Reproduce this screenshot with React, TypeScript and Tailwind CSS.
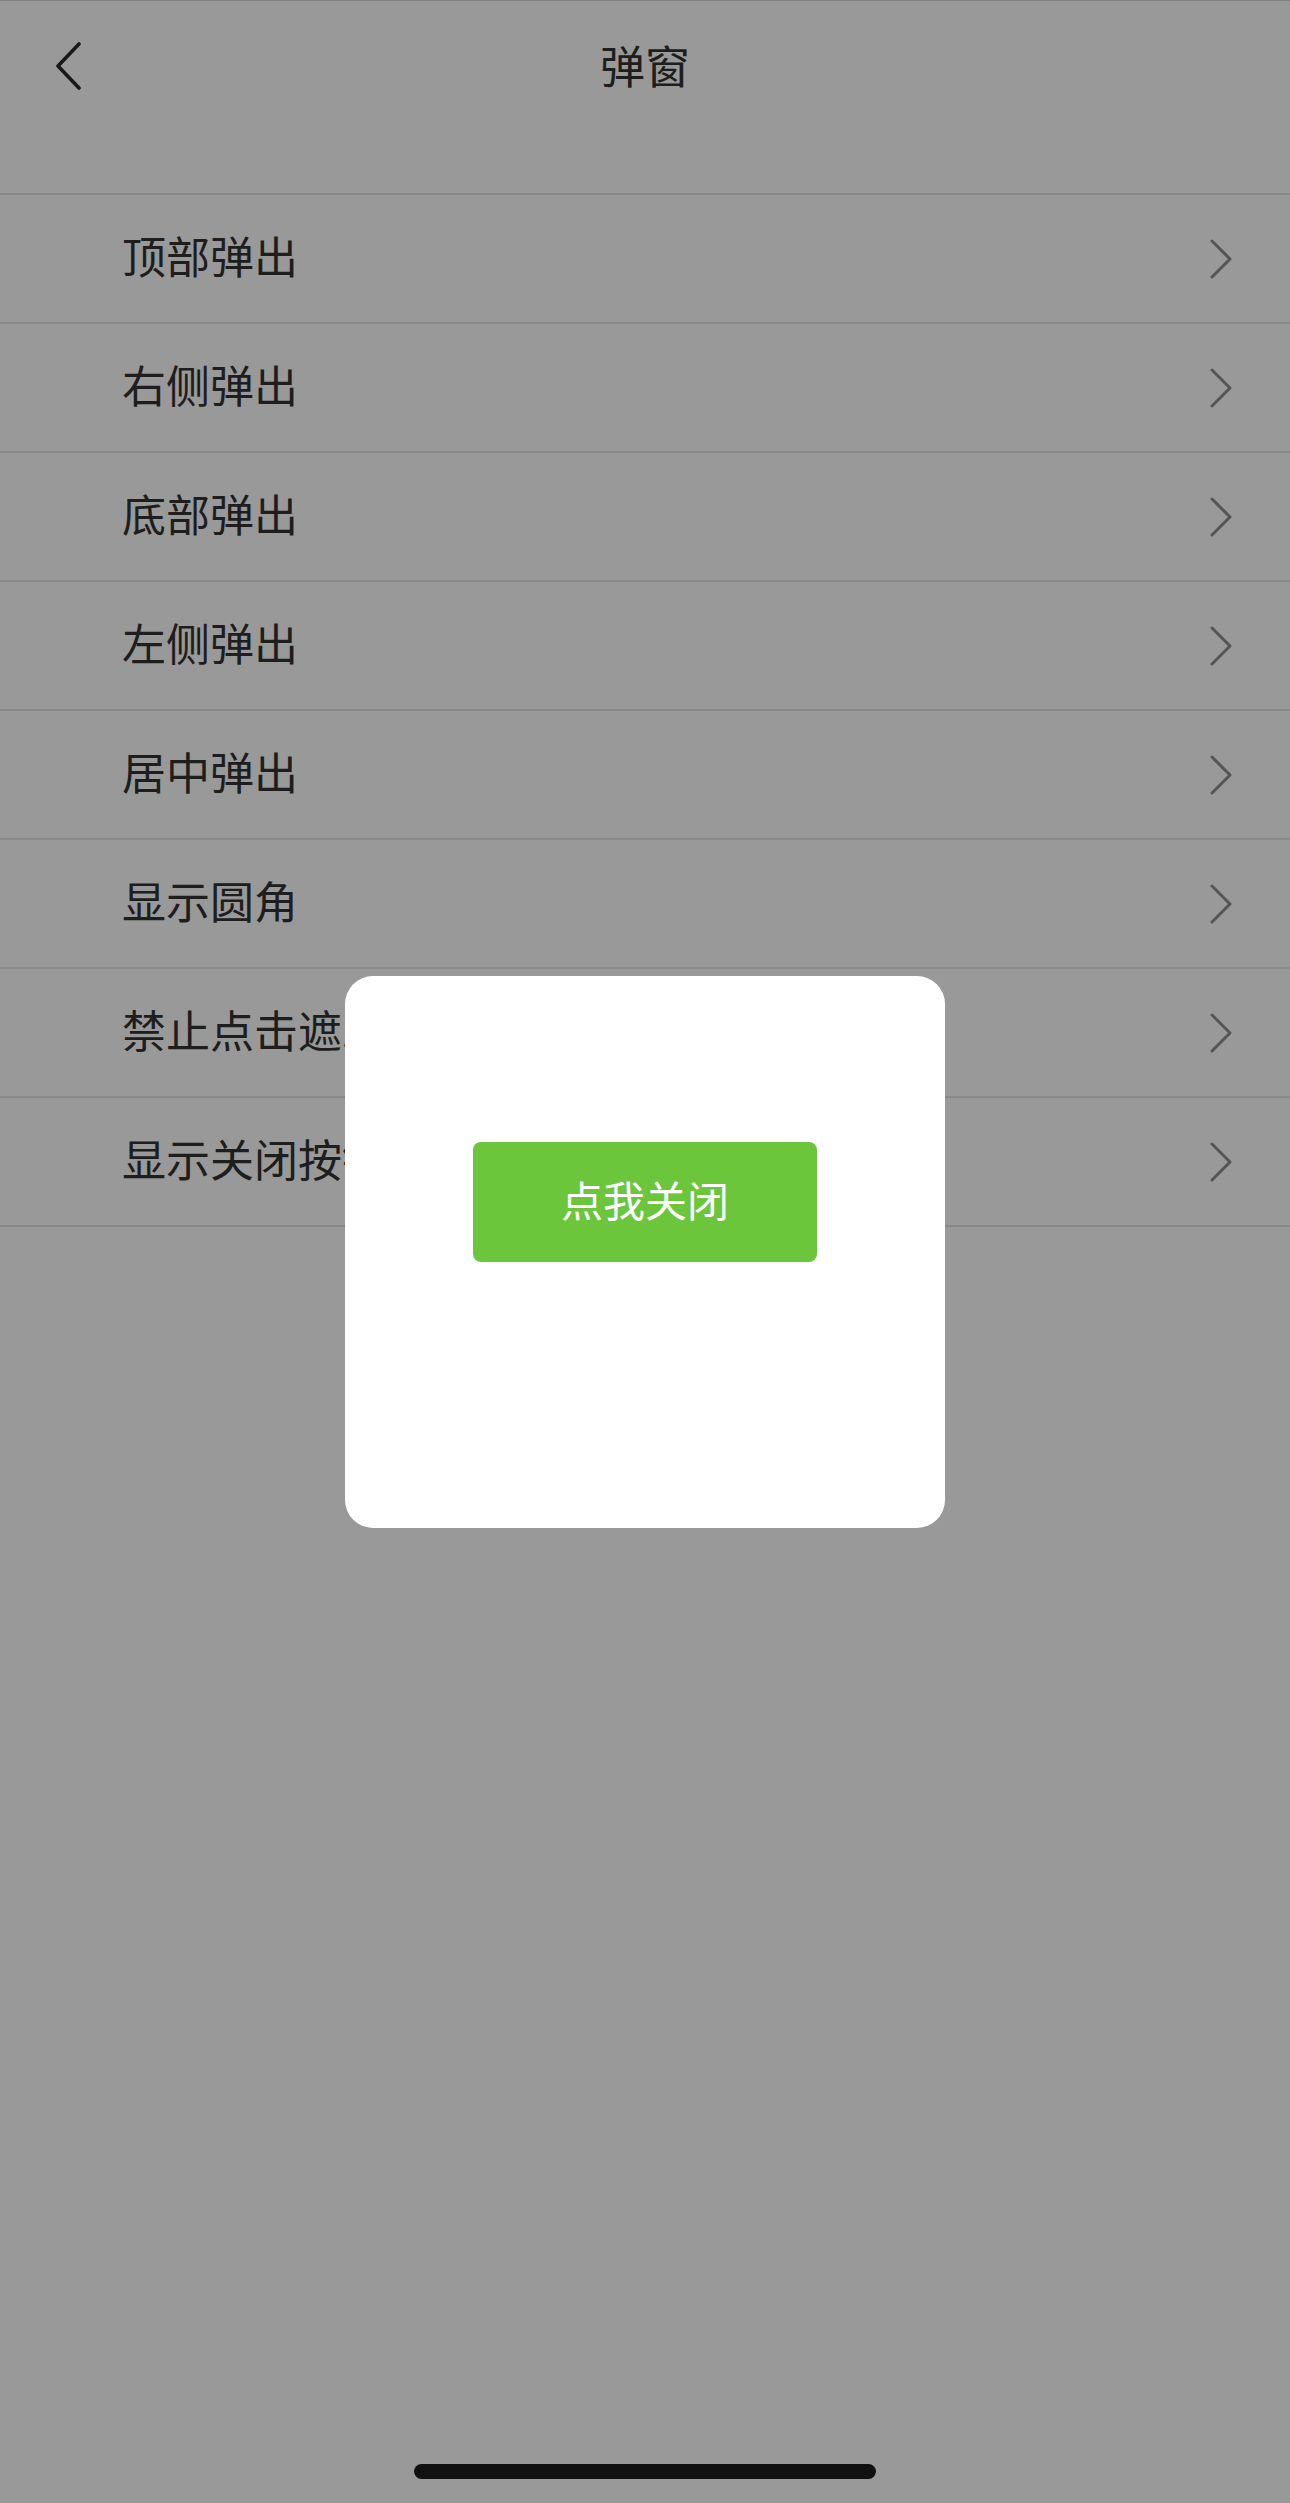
const items = [
  "顶部弹出",
  "右侧弹出",
  "底部弹出",
  "左侧弹出",
  "居中弹出",
  "显示圆角",
  "禁止点击遮罩",
  "显示关闭按钮",
];

const font = { fontFamily: '"Noto Sans CJK SC", "Noto Sans", sans-serif' };

function Chevron() {
  return (
    <svg width="24" height="40" viewBox="0 0 24 40" fill="none" className="text-[#8e8e8e]">
      <path d="M3 2L21 20L3 38" stroke="currentColor" strokeWidth="3" strokeLinecap="round" strokeLinejoin="round" />
    </svg>
  );
}

export default function App() {
  return (
    <div className="relative h-[2503px] w-[1290px] overflow-hidden bg-white" style={font}>
      {/* Page underneath the mask */}
      <div className="border-t border-[#d8d8d8]">
        <header className="relative flex h-[132px] items-center justify-center">
          <button className="absolute left-[50px] top-[38px] flex h-[54px] w-[36px] items-center justify-center text-[#2b2b2b]" aria-label="back">
            <svg width="28" height="48" viewBox="0 0 28 48" fill="none">
              <path d="M25 2L4 24L25 46" stroke="currentColor" strokeWidth="3.6" strokeLinecap="round" strokeLinejoin="round" />
            </svg>
          </button>
          <h1 className="pb-[6px] text-[45px] leading-none text-[#333333]">弹窗</h1>
        </header>

        <ul className="mt-[60px] border-t-2 border-[#e5e5e5]">
          {items.map((label) => (
            <li
              key={label}
              className="flex h-[129px] items-center justify-between border-b-2 border-[#e5e5e5] pl-[122px] pr-[57px]"
            >
              <span className="block pb-[7px] text-[44px] leading-none text-[#333333]">{label}</span>
              <Chevron />
            </li>
          ))}
        </ul>
      </div>

      {/* Mask */}
      <div className="absolute inset-0 flex items-center justify-center bg-black/40">
        <div className="flex h-[552px] w-[600px] flex-col items-center rounded-[28px] bg-white pt-[166px]">
          <button className="flex h-[120px] w-[344px] items-center justify-center rounded-[8px] bg-[#6cc63c] pb-[6px] text-[42px] leading-none text-white">
            点我关闭
          </button>
        </div>
      </div>

      {/* Home indicator */}
      <div className="absolute bottom-[24px] left-1/2 h-[15px] w-[462px] -translate-x-1/2 rounded-full bg-[#111111]" />
    </div>
  );
}
